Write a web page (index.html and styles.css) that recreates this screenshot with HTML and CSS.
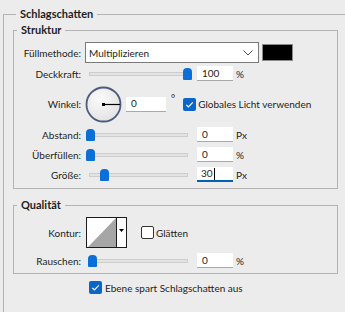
FILE: index.html
```html
<!DOCTYPE html>
<html lang="de">
<head>
    <meta charset="UTF-8">
    <title>Schlagschatten</title>
    <link rel="stylesheet" href="styles.css">
</head>
<body>
<fieldset class="group outer">
    <legend>Schlagschatten</legend>

    <fieldset class="group box structure">
        <legend>Struktur</legend>
        <div class="row row-mode">
            <span class="lbl">Füllmethode:</span>
            <div class="select">
                <span>Multiplizieren</span>
                <svg class="chev" width="10" height="6" viewBox="0 0 10 6"><polyline points="0.5,0.5 5,5 9.5,0.5" fill="none" stroke="#555" stroke-width="1"/></svg>
            </div>
            <div class="swatch"></div>
        </div>
        <div class="row row-slider">
            <span class="lbl">Deckkraft:</span>
            <div class="slider" style="--v: 100"><span class="track"></span><span class="thumb"></span></div>
            <div class="field">100</div>
            <span class="unit">%</span>
        </div>
        <div class="row row-angle">
            <span class="lbl">Winkel:</span>
            <svg class="dial" width="37" height="38" viewBox="0 0 37 38">
                <defs>
                    <radialGradient id="dialFill" cx="40%" cy="35%" r="70%">
                        <stop offset="0" stop-color="#fbfbfb"/>
                        <stop offset="1" stop-color="#e2e2e2"/>
                    </radialGradient>
                </defs>
                <circle cx="18.5" cy="19.5" r="17" fill="url(#dialFill)" stroke="#4c5b7e" stroke-width="1.8"/>
                <line x1="18.5" y1="19.5" x2="35" y2="19.5" stroke="#000" stroke-width="1.2"/>
                <rect x="17" y="18" width="3" height="3" fill="#000"/>
            </svg>
            <div class="field field-angle">0</div>
            <span class="deg">°</span>
            <span class="check on">
                <svg width="13" height="13" viewBox="0 0 13 13"><polyline points="3.3,6.8 5.4,8.9 9.8,4.3" fill="none" stroke="#fff" stroke-width="1.2"/></svg>
            </span>
            <span class="check-text">Globales Licht verwenden</span>
        </div>
        <div class="row row-slider">
            <span class="lbl">Abstand:</span>
            <div class="slider" style="--v: 0"><span class="track"></span><span class="thumb"></span></div>
            <div class="field">0</div>
            <span class="unit">Px</span>
        </div>
        <div class="row row-slider">
            <span class="lbl">Überfüllen:</span>
            <div class="slider" style="--v: 0"><span class="track"></span><span class="thumb"></span></div>
            <div class="field">0</div>
            <span class="unit">%</span>
        </div>
        <div class="row row-slider">
            <span class="lbl">Größe:</span>
            <div class="slider" style="--v: 14"><span class="track"></span><span class="thumb"></span></div>
            <div class="field active">30<span class="caret"></span></div>
            <span class="unit">Px</span>
        </div>
    </fieldset>

    <fieldset class="group box quality">
        <legend>Qualität</legend>
        <div class="row row-contour">
            <span class="lbl">Kontur:</span>
            <svg class="contour" width="41" height="31" viewBox="0 0 41 31">
                <rect x="0.5" y="0.5" width="40" height="30" fill="#fff" stroke="#1c1c1c"/>
                <polygon points="2,30 30,1 30,30" fill="#a6a6a6"/>
                <line x1="30.5" y1="0.5" x2="30.5" y2="30.5" stroke="#1c1c1c"/>
                <polygon points="33,12 38,12 35.5,15" fill="#000"/>
            </svg>
            <span class="check off"></span>
            <span class="check-text">Glätten</span>
        </div>
        <div class="row row-slider">
            <span class="lbl">Rauschen:</span>
            <div class="slider" style="--v: 2"><span class="track"></span><span class="thumb"></span></div>
            <div class="field">0</div>
            <span class="unit">%</span>
        </div>
    </fieldset>

    <div class="row row-layer">
        <span class="check on">
            <svg width="13" height="13" viewBox="0 0 13 13"><polyline points="3.3,6.8 5.4,8.9 9.8,4.3" fill="none" stroke="#fff" stroke-width="1.2"/></svg>
        </span>
        <span class="check-text">Ebene spart Schlagschatten aus</span>
    </div>
</fieldset>
</body>
</html>
```

FILE: styles.css
```css
* {
    box-sizing: border-box;
}
body {
    margin: 0;
    padding-top: 6px;
    background: #ececec;
    font-family: Lato, "Noto Sans", sans-serif;
    font-size: 10px;
    color: #1e1e1e;
    overflow: hidden;
}

/*--------------------------*/
.group {
    margin: 0;
    padding: 0;
    border: 1px solid #b3b3b3;
    min-width: 0;
}
.group legend {
    padding: 0 4px;
    margin-left: 3px;
    font-size: 11px;
    font-weight: bold;
    line-height: 16px;
}
.outer {
    margin-left: 3px;
    width: 342px;
    height: 306px;
    padding-left: 9px;
    border-right: none;
    border-bottom: none;
}
.box {
    width: 325px;
}
.structure {
    padding-bottom: 6px;
}
.quality {
    margin-top: 8px;
    padding-bottom: 5px;
}

/*--------------------------*/
.row {
    display: flex;
    align-items: center;
}
.lbl {
    width: 67px;
    margin-right: 4px;
    text-align: right;
    white-space: nowrap;
}
.row-mode {
    margin-top: 4px;
    height: 21px;
}
.select {
    width: 174px;
    height: 21px;
    background: #fff;
    border: 1px solid #7a7a7a;
    display: flex;
    align-items: center;
    justify-content: space-between;
    padding: 0 5px 0 3px;
}
.chev {
    display: block;
}
.swatch {
    width: 31px;
    height: 17px;
    margin-left: 3px;
    background: #000;
    border: 1px solid #8a8a8a;
}

.row-slider {
    height: 15px;
    margin-top: 5px;
}
.row-mode + .row-slider {
    margin-top: 3px;
}
.slider {
    position: relative;
    width: 108px;
    height: 15px;
}
.slider .track {
    position: absolute;
    left: 4px;
    right: 5px;
    top: 6px;
    height: 4px;
    background: #e3e3e3;
    border: 1px solid #cdcdcd;
}
.slider .thumb {
    position: absolute;
    top: 2px;
    left: calc(1px + var(--v) * 0.97px);
    width: 9px;
    height: 12px;
    background: #0a6fd6;
    border-radius: 4px 4px 1px 1px;
}
.field {
    width: 36px;
    height: 15px;
    margin-left: 4px;
    padding-left: 5px;
    line-height: 15px;
    background: #fff;
    border-bottom: 1px solid #a9a9a9;
    display: flex;
    align-items: center;
}
.field.active {
    border-bottom: 2px solid #0063b1;
    padding-left: 4px;
}
.caret {
    width: 1px;
    height: 12px;
    margin-left: 1px;
    background: #000;
}
.unit {
    margin-left: 3px;
}

.row-angle {
    margin-top: 4px;
    height: 38px;
}
.row-angle + .row-slider {
    margin-top: 4px;
}
.dial {
    display: block;
}
.field-angle {
    width: 40px;
}
.deg {
    align-self: flex-start;
    margin-top: 8px;
    margin-left: 5px;
    line-height: 10px;
}
.check {
    width: 13px;
    height: 13px;
    border-radius: 2px;
    flex: none;
}
.check svg {
    display: block;
}
.check.on {
    background: #0a66c8;
}
.check.off {
    background: #fff;
    border: 1px solid #333;
}
.check-text {
    margin-left: 2px;
    white-space: nowrap;
}
.row-angle .check {
    margin-left: 8px;
}

.row-contour {
    margin-top: 4px;
    height: 31px;
}
.contour {
    display: block;
    margin-left: 1px;
}
.row-contour .check {
    margin-left: 14px;
}
.quality .row-slider {
    margin-top: 5px;
}

.row-layer {
    margin-top: 7px;
    padding-left: 76px;
}
.row-layer .check-text {
    margin-left: 3px;
}
```
